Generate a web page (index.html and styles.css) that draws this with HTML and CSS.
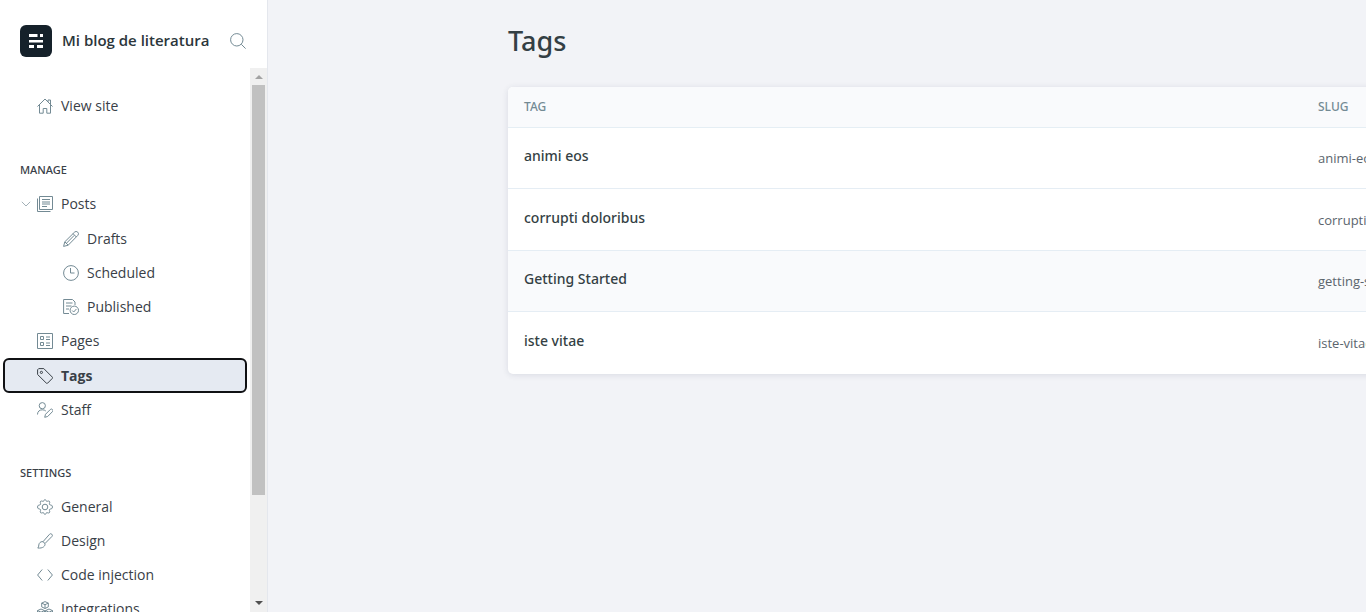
FILE: index.html
```
<!DOCTYPE html>
<html lang="es">
<head>
<meta charset="utf-8">
<title>Tags - Mi blog de literatura</title>
<link rel="stylesheet" href="styles.css">
</head>
<body>
<div class="app">
  <aside class="sidebar">
    <header class="site-head">
      <svg class="logo" viewBox="0 0 32 32"><rect width="32" height="32" rx="6" fill="#15212a"/><path fill="#fff" d="M9 9h8.500v3H9zM20 9h3v3h-3zM9 15h14v2.500H9zM9 20h5v3H9zM17 20h6v3h-6z"/></svg>
      <span class="site-name">Mi blog de literatura</span>
      <button class="search" aria-label="Search"><svg viewBox="0 0 16 16"><circle cx="6.800" cy="6.800" r="6.200"/><path d="m11.300 11.300 4.300 4.300"/></svg></button>
    </header>
    <div class="nav-area">
      <nav class="nav">
        <ul class="list">
          <li><a class="item" href="#"><svg viewBox="0 0 16 16"><path d="M.5 8.500 8 1l7.500 7.500M2.500 7v8.200h3.700v-4.700h3.600v4.700h3.700V7M11 4V2h2.500v4.500"/></svg>View site</a></li>
        </ul>
        <h2 class="heading">Manage</h2>
        <ul class="list">
          <li class="group">
            <button class="toggle" aria-label="Collapse posts"><svg viewBox="0 0 10 6"><path d="m.8.8 4.200 4.200L9.200.8"/></svg></button>
            <a class="item" href="#"><svg viewBox="0 0 16 16"><path d="M2.500.5h13v13h-13zM.5 2.500v13h13M5 3.500h8M5 6h8M5 8h8M5 10.500h5"/></svg>Posts</a>
            <ul class="list sub">
              <li><a class="item" href="#"><svg viewBox="0 0 16 16"><path d="m.6 15.400 1.200-4.600L11.500 1.200a2 2 0 0 1 3.300 3.200L5.200 14.200zM1.800 10.800l3.400 3.400M10 2.600l3.400 3.400M11.300 4.300 3.500 12.200"/></svg>Drafts</a></li>
              <li><a class="item" href="#"><svg viewBox="0 0 16 16"><circle cx="8" cy="8" r="7.400"/><path d="M7.500 3v5h4"/></svg>Scheduled</a></li>
              <li><a class="item" href="#"><svg viewBox="0 0 16 16"><path d="M6 14.500H.6V.5h8.900l2.500 2.500v3M3 4h6.500M3 7h5.500M3 10h3"/><circle cx="11.300" cy="11.300" r="4.200"/><path d="m9.200 11.500 1.500 1.500 2.700-3"/></svg>Published</a></li>
            </ul>
          </li>
          <li><a class="item" href="#"><svg viewBox="0 0 16 16"><path d="M.5.500h15v15H.5zM3.500 3.500h3v3h-3zM3.500 9.500h3v3h-3zM9 4h4M9 6.500h4M9 10h4M9 12.500h4"/></svg>Pages</a></li>
          <li><a class="item active" href="#"><svg viewBox="0 0 16 16"><path d="M.6 1.800V6.500l8.700 8.600a1 1 0 0 0 1.400 0l4.600-4.700a1 1 0 0 0 0-1.300L6.800.6H1.700z"/><circle cx="4.400" cy="4.400" r="1.100"/></svg>Tags</a></li>
          <li><a class="item" href="#"><svg viewBox="0 0 16 16"><circle cx="5.300" cy="3.700" r="3.100"/><path d="M.5 12.500c0-3 2-4.700 4.800-4.700 1.500 0 2.700.4 3.500 1.200M7.700 15.300l.8-3L13.300 7.500a1.500 1.500 0 0 1 2.100 2.200L10.700 14.500z"/></svg>Staff</a></li>
        </ul>
        <h2 class="heading">Settings</h2>
        <ul class="list">
          <li><a class="item" href="#"><svg viewBox="0 0 16 16"><path d="M6.500 2.300C7 1.900 7 .6 8 .6s1 1.300 1.500 1.700c.6.400 1.900-.8 2.900 0 .9.900-.1 2-.1 2.800.1.700 1.300.9 2.400 1.200.9.400 1 2.900 0 3.400-1.100.3-2.300.5-2.400 1.200 0 .8 1 1.900.1 2.800-1 .8-2.300-.4-2.900 0-.5.400-.5 1.700-1.500 1.700s-1-1.300-1.500-1.700c-.6-.4-1.900.8-2.900 0-.9-.9.100-2 .1-2.800-.1-.7-1.300-.9-2.400-1.200-1-.5-.9-3 0-3.400 1.100-.3 2.300-.5 2.400-1.200 0-.8-1-1.900-.1-2.800 1-.8 2.300.4 2.900 0z"/><circle cx="8" cy="8" r="2.800"/></svg>General</a></li>
          <li><a class="item" href="#"><svg viewBox="0 0 16 16"><path d="M6 8.700 12.500 1.300a1.600 1.600 0 0 1 2.400 2.200L8 10.500M6 8.700l2 1.800c.4 2.500-2 5.100-7.300 4.500 1.500-1 .6-2.500 1.500-4.400.8-1.600 2.500-2.200 3.800-1.900z"/></svg>Design</a></li>
          <li><a class="item" href="#"><svg viewBox="0 0 16 16"><path d="M5.200 2.500.6 8l4.600 5.500M10.800 2.500 15.400 8l-4.600 5.500"/></svg>Code injection</a></li>
          <li><a class="item" href="#"><svg viewBox="0 0 16 16"><path d="m8 .6 3.300 1.500v3.800L8 7.500 4.700 5.900V2.100zM4.700 2.100 8 3.700l3.300-1.600M8 3.700v3.800M4 8l3.500 1.600v4L4 15.400.5 13.600v-4zM.5 9.600 4 11.200l3.500-1.600M4 11.200v4.200M12 8l3.500 1.600v4L12 15.400l-3.500-1.800v-4zM8.500 9.600 12 11.200l3.500-1.600M12 11.200v4.200"/></svg>Integrations</a></li>
        </ul>
      </nav>
      <div class="scrollbar" aria-hidden="true">
        <svg class="arrow" viewBox="0 0 8 4"><path fill="#a3a3a3" d="M0 4 4 0l4 4z"/></svg>
        <div class="track"><div class="thumb"></div></div>
        <svg class="arrow" viewBox="0 0 8 4"><path fill="#505050" d="M0 0h8L4 4z"/></svg>
      </div>
    </div>
  </aside>
  <main class="main">
    <h1 class="title">Tags</h1>
    <div class="card">
      <table class="tags">
        <thead><tr><th class="name-col">TAG</th><th>SLUG</th></tr></thead>
        <tbody>
          <tr><td class="name">animi eos</td><td>animi-eos</td></tr>
          <tr><td class="name">corrupti doloribus</td><td>corrupti-doloribus</td></tr>
          <tr class="hovered"><td class="name">Getting Started</td><td>getting-started</td></tr>
          <tr><td class="name">iste vitae</td><td>iste-vitae</td></tr>
        </tbody>
      </table>
    </div>
  </main>
</div>
</body>
</html>
```
FILE: styles.css
```
* { box-sizing: border-box; }
body {
  margin: 0;
  background: #f2f3f7;
  color: #394047;
  font: 14px/20px "Open Sans", "Noto Sans", sans-serif;
}
.app { display: flex; height: 100vh; overflow: hidden; }
button { border: 0; padding: 0; background: none; }
svg { display: block; flex: none; }

.sidebar {
  display: flex;
  flex-direction: column;
  flex: none;
  width: 268px;
  background: #fff;
  border-right: 1px solid #e4e7ed;
}
.site-head {
  display: flex;
  align-items: center;
  flex: none;
  height: 68px;
  padding: 14px 21px 0 20px;
}
.logo { width: 32px; height: 32px; margin-right: 10px; }
.site-name { flex: 1; padding-bottom: 2px; font-size: 15px; font-weight: 600; color: #2c363b; white-space: nowrap; }
.search svg { width: 16px; height: 16px; }
.search svg, .item svg, .toggle svg {
  fill: none;
  stroke: #738a94;
  stroke-width: 1;
}
.nav-area { display: flex; flex: 1; min-height: 0; }
.nav { flex: 1; overflow: hidden; padding: 21px 3px 0; }
.list { list-style: none; margin: 0; padding: 0; }
.item {
  display: flex;
  align-items: center;
  gap: 8px;
  height: 34px;
  padding-left: 34px;
  border-radius: 6px;
  color: #394047;
  text-decoration: none;
}
.item svg { width: 16px; height: 16px; }
.item.active {
  height: 35px;
  background: #e5eaf2;
  border: 2px solid #101114;
  padding-left: 32px;
  font-weight: 700;
}
.item.active svg { stroke: #394047; }
.sub { padding-top: 1px; }
.sub .item { padding-left: 60px; }
.heading {
  margin: 38px 0 9px 17px;
  font-family: "Noto Sans", "Open Sans", sans-serif;
  font-size: 11px;
  line-height: 16px;
  font-weight: 500;
  text-transform: uppercase;
}
.list:first-child + .heading { margin-top: 39px; }
.group { position: relative; }
.toggle { position: absolute; left: 18px; top: 14px; }
.toggle svg { width: 10px; height: 6px; stroke: #a3b1b8; }

.scrollbar {
  display: flex;
  flex-direction: column;
  align-items: center;
  width: 17px;
  padding: 7px 2px;
  background: #f0f0f0;
}
.arrow { width: 8px; height: 4px; }
.track { flex: 1; width: 13px; margin: 6px 0; }
.thumb { height: 80.4%; background: #c1c1c1; }

.main { flex: 1; min-width: 0; overflow: hidden; padding: 23px 0 0 240px; }
.title {
  margin: 0 0 28px;
  font-family: "Noto Sans", "Open Sans", sans-serif;
  font-size: 27px;
  line-height: 36px;
  font-weight: 500;
  color: #343f44;
}
.card {
  width: 1160px;
  border-radius: 5px;
  background: #fff;
  overflow: hidden;
  box-shadow: 0 1px 6px rgba(40, 50, 80, 0.12);
}
.tags { width: 100%; border-collapse: separate; border-spacing: 0; table-layout: fixed; }
.tags th, .tags td { padding: 0 0 0 16px; text-align: left; }
.tags th {
  height: 41px;
  background: #f9fafc;
  border-bottom: 1px solid #e5eef4;
  color: #738a94;
  font-family: "Noto Sans", "Open Sans", sans-serif;
  font-size: 12px;
  font-weight: 500;
}
.name-col { width: 794px; }
.tags td { height: 62px; border-bottom: 1px solid #e5edf4; font-size: 13px; color: #5b656d; }
.tags tr:nth-child(odd) td { height: 61px; }
.tags tr:last-child td { border-bottom: 0; }
.tags .name {
  padding-bottom: 4px;
  font-family: "Noto Sans", "Open Sans", sans-serif;
  font-size: 14px;
  font-weight: 500;
  color: #343f44;
}
.hovered { background: #f9fafc; }
```
